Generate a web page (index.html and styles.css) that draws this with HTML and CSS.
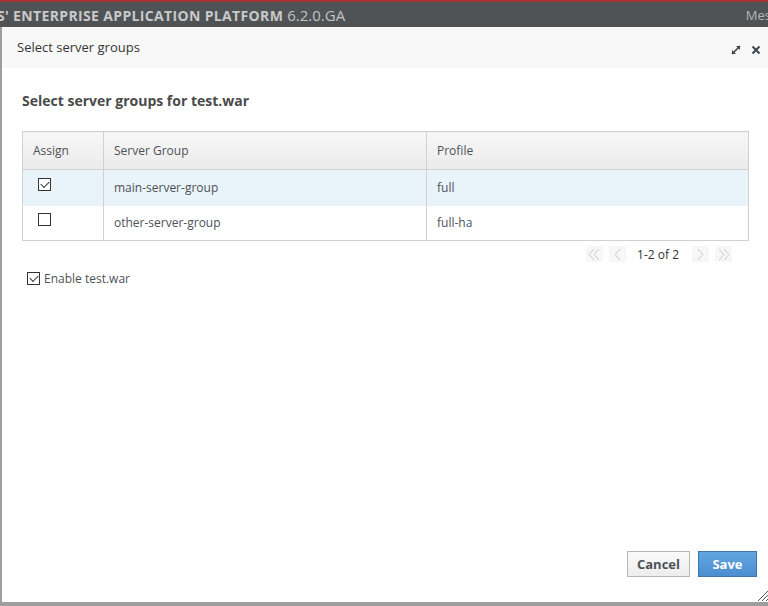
FILE: index.html
```html
<!DOCTYPE html>
<html>
<head>
<meta charset="utf-8">
<link rel="stylesheet" href="styles.css">
</head>
<body>
<div class="topbar">
  <div class="brand"><span class="brand-name">S' ENTERPRISE APPLICATION PLATFORM</span><span class="brand-ver">6.2.0.GA</span></div>
  <div class="msg">Mes</div>
</div>
<div class="dialog">
  <div class="dlg-head">
    <span class="dlg-title">Select server groups</span>
    <span class="dlg-tools">
      <svg width="10" height="10" viewBox="0 0 10 10"><path d="M1 9 L9 1" stroke="#3d4550" stroke-width="1.6"/><path d="M5 1 H9 V5 Z" fill="#3d4550"/><path d="M1 5 V9 H5 Z" fill="#3d4550"/></svg>
      <svg width="10" height="10" viewBox="0 0 10 10"><path d="M1.5 1.5 L8.5 8.5 M8.5 1.5 L1.5 8.5" stroke="#3d4550" stroke-width="2"/></svg>
    </span>
  </div>
  <div class="dlg-body">
    <h2 class="heading">Select server groups for test.war</h2>
    <table class="grid">
      <thead>
        <tr><th class="c1">Assign</th><th class="c2">Server Group</th><th>Profile</th></tr>
      </thead>
      <tbody>
        <tr class="sel"><td class="c1"><span class="cb checked"></span></td><td>main-server-group</td><td>full</td></tr>
        <tr><td class="c1"><span class="cb"></span></td><td>other-server-group</td><td>full-ha</td></tr>
      </tbody>
    </table>
    <div class="pager">
      <span class="pbtn"><svg width="15" height="13" viewBox="0 0 15 13"><path d="M7 1 L2 6.5 L7 12 M12 1 L7 6.5 L12 12" fill="none" stroke="#c8c8c8" stroke-width="1"/></svg></span>
      <span class="pbtn"><svg width="15" height="13" viewBox="0 0 15 13"><path d="M10 1 L5 6.5 L10 12" fill="none" stroke="#c8c8c8" stroke-width="1"/></svg></span>
      <span class="ptext">1-2 of 2</span>
      <span class="pbtn"><svg width="15" height="13" viewBox="0 0 15 13"><path d="M5 1 L10 6.5 L5 12" fill="none" stroke="#c8c8c8" stroke-width="1"/></svg></span>
      <span class="pbtn"><svg width="15" height="13" viewBox="0 0 15 13"><path d="M3 1 L8 6.5 L3 12 M8 1 L13 6.5 L8 12" fill="none" stroke="#c8c8c8" stroke-width="1"/></svg></span>
    </div>
    <label class="enable"><span class="cb checked"></span>Enable test.war</label>
    <div class="spacer"></div>
    <div class="actions">
      <button class="btn">Cancel</button>
      <button class="btn primary">Save</button>
    </div>
  </div>
  <svg class="grip" width="11" height="11" viewBox="0 0 11 11"><path d="M1 11 L11 1 M5 11 L11 5 M9 11 L11 9" stroke="#555" stroke-width="1"/></svg>
</div>
</body>
</html>
```
FILE: styles.css
```css
* { box-sizing: border-box; }
html, body { margin: 0; padding: 0; }
body {
  width: 768px;
  height: 606px;
  overflow: hidden;
  font-family: "Open Sans", "Liberation Sans", sans-serif;
  color: #4d5258;
  background: #9e9e9e;
}
.topbar {
  height: 27px;
  background: #505356;
  border-top: 2px solid #a73333;
  display: flex;
  align-items: center;
  justify-content: space-between;
}
.brand {
  margin-left: -3px;
  display: flex;
  align-items: baseline;
  white-space: nowrap;
}
.brand-name {
  font-weight: 700;
  font-size: 14px;
  color: #c9c9c9;
  letter-spacing: 0.35px;
}
.brand-ver {
  margin-left: 4px;
  font-size: 15px;
  color: #c2c2c2;
}
.msg {
  font-size: 13px;
  color: #b5b5b5;
  margin-right: -3px;
}
.dialog {
  position: relative;
  margin-left: 2px;
  height: 579px;
  background: #fff;
  display: flex;
  flex-direction: column;
  border-bottom: 4px solid #9e9e9e;
}
.dlg-head {
  height: 41px;
  background: #f8f8f8;
  display: flex;
  align-items: center;
  justify-content: space-between;
  padding: 0 6px 0 15px;
}
.dlg-title {
  font-size: 13px;
  color: #363636;
  margin-top: -2px;
}
.dlg-tools {
  display: flex;
  gap: 10px;
  align-items: center;
  margin-top: 4px;
  margin-right: 1px;
}
.dlg-body {
  flex: 1;
  display: flex;
  flex-direction: column;
  padding: 0 11px 25px 20px;
}
.heading {
  margin: 25px 0 0;
  font-size: 14px;
  font-weight: 700;
  color: #4a4a4a;
  line-height: 16px;
}
.grid {
  margin-top: 22px;
  width: 727px;
  border-collapse: collapse;
  font-size: 12px;
  border: 1px solid #d1d1d1;
}
.grid th {
  height: 38px;
  text-align: left;
  font-weight: 400;
  padding: 0 10px;
  background: linear-gradient(#f7f7f7, #ebebeb);
  border: 1px solid #d1d1d1;
  color: #4d5258;
}
.grid td {
  padding: 0 10px;
  height: 35px;
  border-left: 1px solid #d1d1d1;
  color: #4d5258;
}
.grid tbody tr.sel td { background: #e9f3fa; height: 36px; }
.grid .c1 { width: 81px; }
.grid td.c1 { padding-left: 15px; }
.grid .c2 { width: 323px; }
.cb {
  display: inline-block;
  width: 13px;
  height: 13px;
  border: 1px solid #333;
  background: #fff;
  position: relative;
  vertical-align: middle;
}
.grid td .cb { top: -5px; }
.cb.checked::after {
  content: "";
  position: absolute;
  left: 2px;
  top: 2px;
  width: 7px;
  height: 4px;
  border-left: 1px solid #333;
  border-bottom: 1px solid #333;
  transform: rotate(-45deg);
  transform-origin: center;
}
.pager {
  display: flex;
  align-items: center;
  justify-content: flex-end;
  margin-top: 4px;
  margin-right: 22px;
  height: 18px;
  font-size: 12px;
  color: #333;
}
.pbtn {
  width: 17px;
  height: 16px;
  background: #f7f7f7;
  display: flex;
  align-items: center;
  justify-content: center;
  margin: 0 3px;
}
.ptext { margin: 0 10px 0 8px; }
.enable {
  margin-top: 7px;
  margin-left: 5px;
  display: flex;
  align-items: center;
  gap: 4px;
  font-size: 12px;
  color: #4d5258;
}
.spacer { flex: 1; }
.actions {
  display: flex;
  justify-content: flex-end;
  gap: 8px;
}
.btn {
  height: 26px;
  padding: 0 9px;
  font-family: "Open Sans", "Liberation Sans", sans-serif;
  font-size: 13px;
  font-weight: 700;
  color: #4d5258;
  border: 1px solid #b7b7b7;
  background: linear-gradient(#fafafa, #ededed);
}
.btn.primary {
  width: 59px;
  color: #fff;
  border-color: #3d76ad;
  background: linear-gradient(#61a5e0, #4b8fd0);
}
.grip { position: absolute; right: 0; bottom: 1px; }
```
